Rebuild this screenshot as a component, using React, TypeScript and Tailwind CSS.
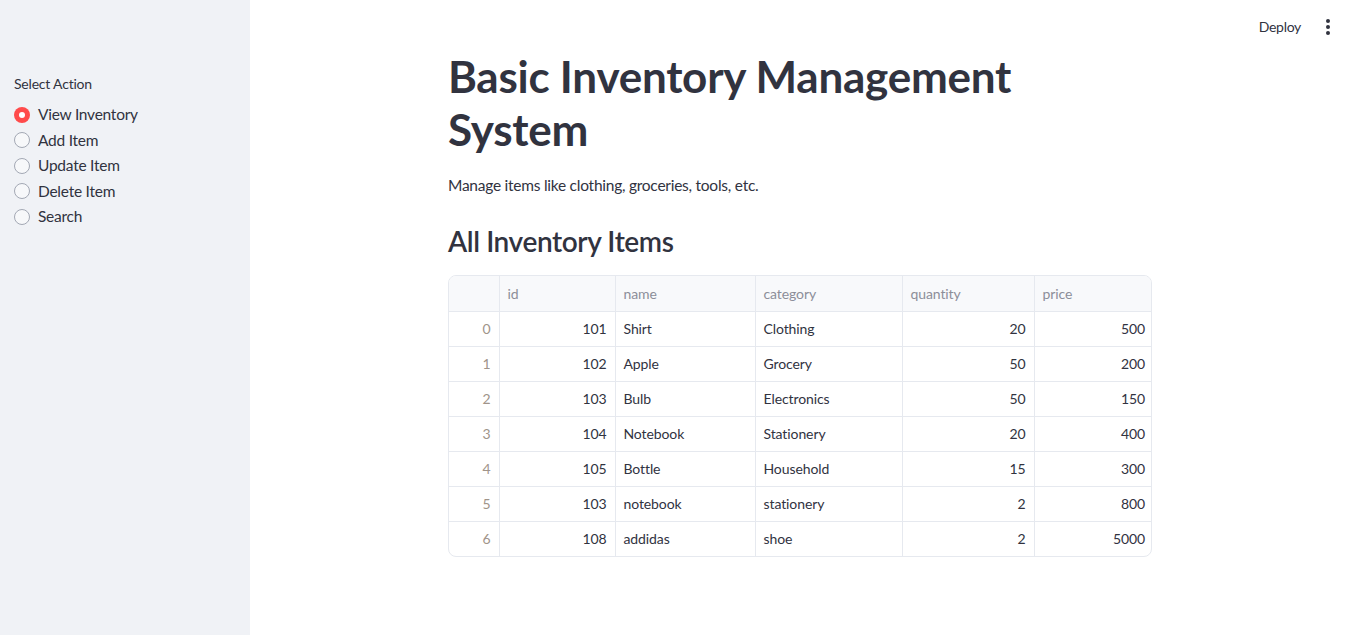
import React from 'react';

const actions = ['View Inventory', 'Add Item', 'Update Item', 'Delete Item', 'Search'];

const rows = [
    { id: 101, name: 'Shirt', category: 'Clothing', quantity: 20, price: 500 },
    { id: 102, name: 'Apple', category: 'Grocery', quantity: 50, price: 200 },
    { id: 103, name: 'Bulb', category: 'Electronics', quantity: 50, price: 150 },
    { id: 104, name: 'Notebook', category: 'Stationery', quantity: 20, price: 400 },
    { id: 105, name: 'Bottle', category: 'Household', quantity: 15, price: 300 },
    { id: 103, name: 'notebook', category: 'stationery', quantity: 2, price: 800 },
    { id: 108, name: 'addidas', category: 'shoe', quantity: 2, price: 5000 },
];

const font = { fontFamily: 'Lato, "Noto Sans", sans-serif' };

const Sidebar: React.FC = () => (
    <aside className="w-[250px] shrink-0 bg-[#f0f2f6] min-h-[635px] px-[14px] pt-[76px]">
        <p className="text-[14px] leading-[16px] text-[#31333f] mb-[10px] tracking-[-0.2px]">Select Action</p>
        <div className="flex flex-col">
            {actions.map((a, i) => (
                <label key={a} className="flex items-center h-[25.5px] gap-[8px]">
                    {i === 0 ? (
                        <span className="w-[16px] h-[16px] rounded-full bg-[#ff4b4b] flex items-center justify-center">
                            <span className="w-[6px] h-[6px] rounded-full bg-white" />
                        </span>
                    ) : (
                        <span className="w-[16px] h-[16px] rounded-full border border-[#a3a8b4] bg-[#f7f8fa]" />
                    )}
                    <span className="text-[15.5px] tracking-[-0.25px] text-[#31333f]">{a}</span>
                </label>
            ))}
        </div>
    </aside>
);

const cols = [
    { key: 'idx', label: '', w: 'w-[50px]' },
    { key: 'id', label: 'id', w: 'w-[116px]' },
    { key: 'name', label: 'name', w: 'w-[140px]' },
    { key: 'category', label: 'category', w: 'w-[147px]' },
    { key: 'quantity', label: 'quantity', w: 'w-[132px]' },
    { key: 'price', label: 'price', w: 'w-[119px]' },
];

const DataTable: React.FC = () => (
    <div className="border border-[#e6e9ef] rounded-[8px] overflow-hidden w-[704px]">
        <table className="w-full table-fixed border-collapse text-[14px] tracking-[-0.1px]">
            <thead>
                <tr className="bg-[#f8f9fb] h-[35px]">
                    {cols.map((c, i) => (
                        <th key={c.key} className={`${c.w} ${i > 0 ? 'border-l' : ''} border-[#e6e9ef] px-[8px] text-left font-normal text-[#8c8e99]`}>
                            {c.label}
                        </th>
                    ))}
                </tr>
            </thead>
            <tbody className="text-[#31333f]">
                {rows.map((r, i) => (
                    <tr key={i} className="h-[35px] border-t border-[#e6e9ef]">
                        <td className="px-[8px] text-right text-[#a0948a]">{i}</td>
                        <td className="px-[8px] text-right border-l border-[#e6e9ef]">{r.id}</td>
                        <td className="px-[8px] border-l border-[#e6e9ef]">{r.name}</td>
                        <td className="px-[8px] border-l border-[#e6e9ef]">{r.category}</td>
                        <td className="px-[8px] text-right border-l border-[#e6e9ef]">{r.quantity}</td>
                        <td className="px-[8px] text-right border-l border-[#e6e9ef]">{r.price}</td>
                    </tr>
                ))}
            </tbody>
        </table>
    </div>
);

export default function App() {
    return (
        <div className="flex w-[1351px] min-h-[635px] bg-white" style={font}>
            <Sidebar />
            <main className="flex-1 relative">
                <div className="absolute top-[16px] right-[18px] flex items-center gap-[22px]">
                    <span className="text-[14px] tracking-[-0.3px] text-[#31333f]">Deploy</span>
                    <span className="flex flex-col gap-[2px] items-center w-[10px]">
                        <span className="w-[4px] h-[4px] rounded-full bg-[#31333f]" />
                        <span className="w-[4px] h-[4px] rounded-full bg-[#31333f]" />
                        <span className="w-[4px] h-[4px] rounded-full bg-[#31333f]" />
                    </span>
                </div>
                <div className="w-[704px] ml-[198px] pt-[50px]">
                    <h1 className="text-[44px] leading-[53px] font-bold text-[#31333f] tracking-[-0.25px]">
                        Basic Inventory Management System
                    </h1>
                    <p className="mt-[17px] text-[15.5px] leading-[24px] text-[#31333f] tracking-[-0.25px]">
                        Manage items like clothing, groceries, tools, etc.
                    </p>
                    <h2 className="mt-[26px] text-[28px] leading-[36px] font-semibold text-[#31333f] tracking-[-0.4px]">
                        All Inventory Items
                    </h2>
                    <div className="mt-[16px]">
                        <DataTable />
                    </div>
                </div>
            </main>
        </div>
    );
}
